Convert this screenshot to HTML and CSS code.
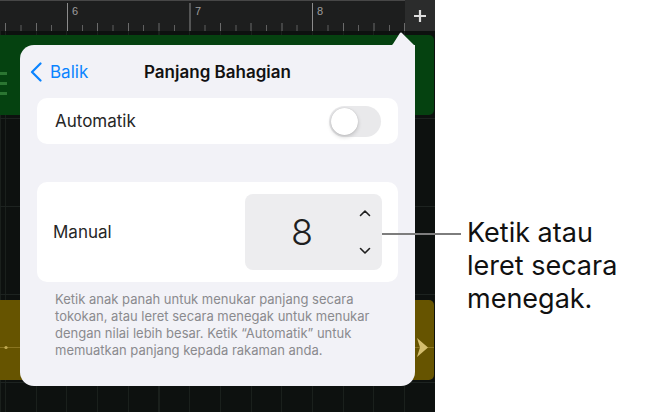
FILE: index.html
```html
<!DOCTYPE html>
<html lang="ms">
<head>
    <meta charset="UTF-8">
    <meta name="viewport" content="width=device-width, initial-scale=1.0">
    <title>Panjang Bahagian</title>
    <link rel="stylesheet" href="styles.css">
</head>
<body>
    <div class="screen">
        <div class="daw">
            <div class="ruler">
                <svg class="ruler-scale" width="405" height="31" viewBox="0 0 405 31">
                    <!-- beat ticks -->
                    <path d="M5.5 23V31M36.5 23V31M97.5 23V31M128.5 23V31M159 23V31M220.5 23V31M251 23V31M282 23V31M343.5 23V31M374 23V31M404.5 23V31" stroke="#6b6b6b" stroke-width="1"/>
                    <path d="M21 25V31M51.5 25V31M82.5 25V31M113 25V31M143.5 25V31M174.5 25V31M205 25V31M236 25V31M266.5 25V31M297 25V31M328 25V31M358.5 25V31M389.5 25V31" stroke="#5f5f5f" stroke-width="1"/>
                    <!-- bar lines -->
                    <path d="M67.5 3V31M190 3V31M312.5 3V31" stroke="#8c8c8c" stroke-width="1"/>
                    <text x="72" y="15" class="bar-number">6</text>
                    <text x="195" y="15" class="bar-number">7</text>
                    <text x="317" y="15" class="bar-number">8</text>
                </svg>
                <button class="add-track" type="button">
                    <svg width="14" height="14" viewBox="0 0 14 14">
                        <path d="M7 1V13M1 7H13" stroke="#dedede" stroke-width="2.2"/>
                    </svg>
                </button>
            </div>

            <div class="tracks">
                <div class="lane lane-first">
                    <div class="region region-green">
                        <span class="region-grip"><i></i><i></i><i></i></span>
                    </div>
                </div>
                <div class="lane"></div>
                <div class="lane"></div>
                <div class="lane lane-audio">
                    <div class="region region-yellow">
                        <svg class="wave" width="444" height="80" viewBox="0 0 444 80">
                            <path d="M0 47.5H444" stroke="#8a7520" stroke-width="1"/>
                            <circle cx="16" cy="47.5" r="1.6" fill="#c2ab52"/>
                            <path d="M427 38L438 47.5L427 57L430 47.5Z" fill="#d4be6e"/>
                        </svg>
                    </div>
                </div>
                <div class="lane"></div>
            </div>

            <div class="popover">
                <svg class="popover-arrow" width="27" height="15" viewBox="0 0 27 15">
                    <path d="M0 15C3 15 4 14 5 13L11.6 2.4C12.4 1.2 13.6 1.2 14.4 2.4L27 15Z" fill="#f2f2f7"/>
                </svg>

                <header class="popover-header">
                    <a class="back" href="#">
                        <svg width="12" height="20" viewBox="0 0 12 20">
                            <path d="M10.5 1.5L2 10L10.5 18.5" fill="none" stroke="#0a84ff" stroke-width="2.2" stroke-linecap="round" stroke-linejoin="round"/>
                        </svg>
                        Balik
                    </a>
                    <h2 class="popover-title">Panjang Bahagian</h2>
                    <span></span>
                </header>

                <div class="group">
                    <span class="row-label">Automatik</span>
                    <span class="switch"><span class="knob"></span></span>
                </div>

                <div class="group group-manual">
                    <span class="row-label">Manual</span>
                    <div class="stepper">
                        <span class="stepper-value">8</span>
                        <span class="stepper-arrows">
                            <svg width="12" height="8" viewBox="0 0 12 8">
                                <path d="M1.5 6.5L6 2L10.5 6.5" fill="none" stroke="#1f1f1f" stroke-width="1.6" stroke-linecap="round" stroke-linejoin="round"/>
                            </svg>
                            <svg width="12" height="8" viewBox="0 0 12 8">
                                <path d="M1.5 1.5L6 6L10.5 1.5" fill="none" stroke="#1f1f1f" stroke-width="1.6" stroke-linecap="round" stroke-linejoin="round"/>
                            </svg>
                        </span>
                    </div>
                </div>

                <p class="hint">
                    Ketik anak panah untuk menukar panjang secara<br>
                    tokokan, atau leret secara menegak untuk menukar<br>
                    dengan nilai lebih besar. Ketik “Automatik” untuk<br>
                    memuatkan panjang kepada rakaman anda.
                </p>
            </div>
        </div>

        <div class="note">
            <p>Ketik atau<br>leret secara<br>menegak.</p>
        </div>

        <!-- pointer from the stepper to the note -->
        <span class="leader"></span>
    </div>
</body>
</html>
```

FILE: styles.css
```css
* {
    box-sizing: border-box;
}
body {
    margin: 0;
    background: #ffffff;
    font-family: Inter, "Noto Sans", sans-serif;
}
.screen {
    position: relative;
    display: flex;
    width: 657px;
    height: 412px;
    overflow: hidden;
}

/* track area */
.daw {
    position: relative;
    flex: none;
    width: 435px;
    display: flex;
    flex-direction: column;
    background: #0d110f;
}
.ruler {
    display: flex;
    height: 31px;
    background: #1d1e1e;
    box-shadow: inset 0 1px #474747;
}
.ruler-scale {
    display: block;
}
.bar-number {
    font-family: "Liberation Sans", sans-serif;
    font-size: 11px;
    fill: #9d9d9d;
}
.add-track {
    width: 30px;
    padding: 0;
    border: none;
    background: #2b2c2c;
    display: grid;
    place-items: center;
}
.tracks {
    flex: 1;
    display: flex;
    flex-direction: column;
    background-image: repeating-linear-gradient(90deg, #1a201c 0 1px, transparent 1px 30.7px);
    background-position: 5px 0;
}
.lane {
    height: 88px;
    flex: none;
    border-bottom: 1px solid #1d2320;
}
.lane-first {
    padding-top: 4px;
}
.lane-audio {
    padding-top: 5px;
}
.region {
    position: relative;
    height: 80px;
    margin: 0 1px 0 -10px;
    border-radius: 5px;
}
.region-green {
    background: #054210;
}
.region-yellow {
    background: #665400;
}
.region-grip {
    position: absolute;
    left: 10px;
    top: 37px;
    display: flex;
    flex-direction: column;
    gap: 7px;
}
.region-grip i {
    display: block;
    width: 7px;
    height: 3px;
    background: #2b7531;
}
.wave {
    display: block;
}

/* popover */
.popover {
    position: absolute;
    left: 20px;
    top: 45px;
    width: 395px;
    height: 341px;
    background: #f2f2f7;
    border-radius: 14px 0 14px 14px;
}
.popover-arrow {
    position: absolute;
    right: 0;
    top: -14px;
}
.popover-header {
    display: grid;
    grid-template-columns: 1fr auto 1fr;
    align-items: center;
    height: 53px;
    padding: 0 10px;
}
.back {
    display: flex;
    align-items: center;
    gap: 8px;
    color: #0a84ff;
    font-size: 17px;
    text-decoration: none;
}
.popover-title {
    margin: 0;
    font-size: 17px;
    font-weight: 600;
    color: #111111;
}
.group {
    display: flex;
    align-items: center;
    justify-content: space-between;
    height: 46px;
    margin: 0 17px;
    padding: 0 17px 0 18px;
    background: #ffffff;
    border-radius: 10px;
}
.group-manual {
    height: 100px;
    margin-top: 38px;
    padding: 0 16px 0 16px;
}
.row-label {
    font-size: 17px;
    color: #262626;
}
.switch {
    position: relative;
    width: 52px;
    height: 31px;
    border-radius: 16px;
    background: #e9e9eb;
}
.knob {
    position: absolute;
    left: 2px;
    top: 2px;
    width: 27px;
    height: 27px;
    border-radius: 50%;
    background: #ffffff;
    box-shadow: 0 2px 4px rgba(0, 0, 0, 0.18), 0 0 1px rgba(0, 0, 0, 0.2);
}
.stepper {
    display: flex;
    width: 137px;
    height: 76px;
    border-radius: 8px;
    background: #ededef;
}
.stepper-value {
    width: 114px;
    display: grid;
    place-items: center;
    font-size: 36px;
    font-weight: 300;
    color: #1f1f1f;
}
.stepper-arrows {
    display: flex;
    flex-direction: column;
    justify-content: space-between;
    padding: 15px 0 15px;
}
.stepper-arrows svg {
    display: block;
}
.hint {
    margin: 9px 0 0 35px;
    font-size: 13px;
    line-height: 17px;
    color: #8a8a8e;
}

/* callout */
.note {
    flex: 1;
    padding: 216px 0 0 32px;
}
.note p {
    margin: 0;
    font-size: 27px;
    line-height: 33px;
    color: #111111;
}
.leader {
    position: absolute;
    left: 382px;
    top: 233px;
    width: 79px;
    height: 2px;
    background: #7d7d7d;
}
```
